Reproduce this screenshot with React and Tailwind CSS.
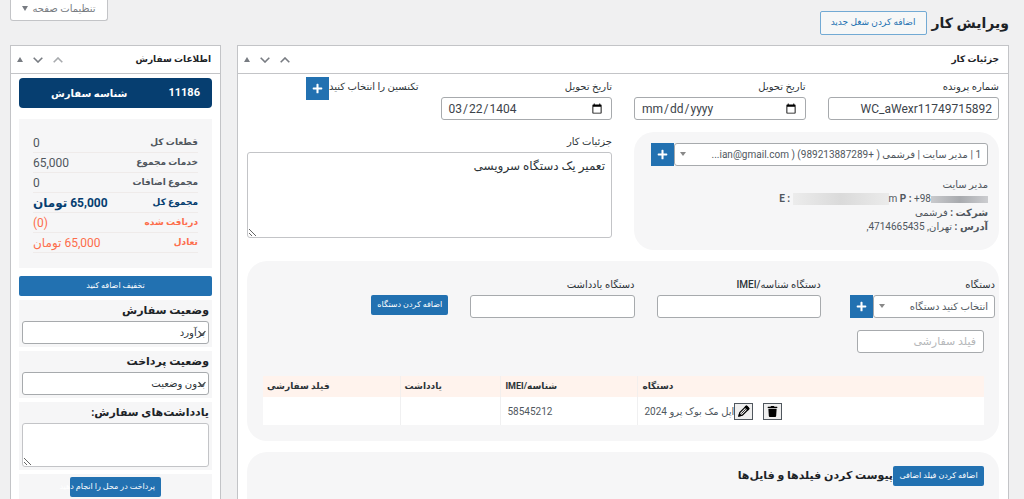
import { FaPlus, FaTrash } from "react-icons/fa";

const totals = [
  { label: "قطعات کل", value: "0", tone: "text-[#50575e]" },
  { label: "خدمات مجموع", value: "65,000", tone: "text-[#50575e]" },
  { label: "مجموع اضافات", value: "0", tone: "text-[#50575e]" },
  { label: "مجموع کل", value: "65,000 تومان", tone: "text-[#063e70] font-bold" },
  { label: "دریافت شده", value: "(0)", tone: "text-[#fd6d4b]" },
  { label: "تعادل", value: "65,000 تومان", tone: "text-[#fd6d4b]" },
];

const field =
  "block h-[23px] w-full rounded-[3px] border border-[#a7aaad] bg-white text-xs text-[#3c434a]";
const label = "block text-[10px] leading-5 font-medium text-[#2c3338]";
const blueButton =
  "h-5 rounded-[2px] bg-[#2271b1] text-[8px] font-medium whitespace-nowrap text-white";

function Chevron({ up, className }) {
  return (
    <svg className={className} width="10" height="6" viewBox="0 0 10 6" fill="none" stroke="currentColor" strokeWidth="1.6">
      <path d={up ? "M.7 5.3 5 1l4.3 4.3" : "M.7.7 5 5 9.3.7"} />
    </svg>
  );
}

function PanelHeader({ title, dim }) {
  return (
    <div className="flex h-7 items-center justify-between border-b border-[#c3c4c7] pr-[9px] pl-[6px]">
      <h2 className="text-[9px] font-bold text-[#1d2327]">{title}</h2>
      <div className="flex items-center gap-[10px] text-[#787c82]">
        <button type="button" aria-label="بالا" className={dim ? "text-[#a7aaad]" : ""}>
          <Chevron up />
        </button>
        <button type="button" aria-label="پایین">
          <Chevron />
        </button>
        <button type="button" aria-label="بستن">
          <svg width="6" height="5" viewBox="0 0 6 5" fill="currentColor">
            <path d="M3 0 6 5H0z" />
          </svg>
        </button>
      </div>
    </div>
  );
}

function PlusButton({ title }) {
  return (
    <button
      type="button"
      aria-label={title}
      className="flex h-[23px] w-[23px] shrink-0 items-center justify-center bg-[#2271b1] text-white"
    >
      <FaPlus size={11} />
    </button>
  );
}

function SearchSelect({ id, text, title }) {
  return (
    <div className="relative min-w-0 flex-1">
      <select
        id={id}
        aria-label={title}
        className="block h-[23px] w-full appearance-none rounded-[3px] border border-[#a7aaad] bg-white pr-[6px] pl-4 text-[10px] text-[#50575e]"
      >
        <option>{text}</option>
      </select>
      <svg className="pointer-events-none absolute top-[9px] left-[6px] text-[#888]" width="6" height="4" viewBox="0 0 6 4" fill="currentColor">
        <path d="M0 0h6L3 4z" />
      </svg>
    </div>
  );
}

function StatusBox({ id, title, text }) {
  return (
    <div className="mb-1 bg-[#f6f6f7] px-[3px] pt-[1px] pb-[3px]">
      <label htmlFor={id} className="block text-[11px] leading-5 font-bold text-[#1d2327]">
        {title}
      </label>
      <div className="relative">
        <select
          id={id}
          className="block h-[23px] w-full appearance-none rounded-[3px] border border-[#a7aaad] bg-white px-[3px] text-[10px] text-[#2c3338]"
        >
          <option>{text}</option>
        </select>
        <Chevron className="pointer-events-none absolute top-[9px] right-[3px] w-2 text-[#3c434a]" />
      </div>
    </div>
  );
}

function Sidebar() {
  return (
    <aside className="w-[211px] shrink-0 border border-[#c3c4c7] bg-white">
      <PanelHeader title="اطلاعات سفارش" dim />
      <div className="px-2 pt-1">
        <div className="flex h-[30px] items-center justify-between rounded bg-[#063e70] pr-3 pl-8 text-[10px] font-bold text-white">
          <span className="text-[11px]">11186</span>
          <span>شناسه سفارش</span>
        </div>
        <dl className="mt-[11px] bg-[#f6f6f7] px-[14px] pt-[14px] pb-[15px]">
          {totals.map((row) => (
            <div
              key={row.label}
              className={`flex h-5 items-center justify-between border-b border-[#efebea] ${row.tone}`}
            >
              <dt className="text-[9px] font-bold">{row.label}</dt>
              <dd className="text-xs">{row.value}</dd>
            </div>
          ))}
        </dl>
        <button type="button" className={`${blueButton} mt-2 mb-1 block w-full`}>
          تخفیف اضافه کنید
        </button>
        <StatusBox id="order-status" title="وضعیت سفارش" text="برآورد" />
        <StatusBox id="payment-status" title="وضعیت پرداخت" text="بدون وضعیت" />
        <div className="mb-1 bg-[#f6f6f7] px-[3px] pt-[1px] pb-[3px]">
          <label htmlFor="order-notes" className="block text-[11px] leading-5 font-bold text-[#1d2327]">
            یادداشت‌های سفارش:
          </label>
          <textarea id="order-notes" className="block h-11 w-full rounded-[3px] border border-[#c3c4c7] bg-white" />
        </div>
        <div className="flex justify-center bg-[#f6f6f7] py-[3px]">
          <button type="button" className={`${blueButton} flex w-[91px] items-center pr-[6px]`}>
            پرداخت در محل را انجام دهید
          </button>
        </div>
      </div>
    </aside>
  );
}

function CustomerBox() {
  return (
    <div className="col-span-2 h-[118px] rounded-[20px] bg-[#f6f6f7] px-[11px] pt-[11px]">
      <div className="flex pl-[6px]">
        <SearchSelect
          title="مشتری"
          text="1 | مدیر سایت | فرشمی ( +989213887289) ( ian@gmail.com..."
        />
        <PlusButton title="افزودن مشتری" />
      </div>
      <div className="mt-3 text-[10px] leading-[14px] text-[#50575e]">
        <p>مدیر سایت</p>
        <p dir="ltr" className="flex items-center justify-end whitespace-pre">
          <b>E : </b>
          <span className="h-3 w-24 bg-linear-to-r from-[#ececec] via-[#dadada] to-[#ebebeb]" />
          m <b>P : </b>+98
          <span className="h-[7px] w-[57px] bg-linear-to-r from-[#c9cacd] via-[#a8aaae] to-[#cccdd0]" />
        </p>
        <p>
          <b>شرکت :</b> فرشمی
        </p>
        <p>
          <b>آدرس :</b> تهران, 4714665435,
        </p>
      </div>
    </div>
  );
}

function DeviceBox() {
  return (
    <section className="mt-[11px] rounded-[20px] bg-[#f6f6f7] pt-[14px] pb-4">
      <div className="grid grid-cols-[152fr_164fr_164fr_201fr] gap-x-[22px] pr-1">
        <div>
          <label htmlFor="device" className={label}>دستگاه</label>
          <div className="flex pl-[7px]">
            <SearchSelect id="device" text="انتخاب کنید دستگاه" />
            <PlusButton title="افزودن دستگاه" />
          </div>
        </div>
        <div>
          <label htmlFor="imei" className={label}>دستگاه شناسه/IMEI</label>
          <input id="imei" className={`${field} px-2`} />
        </div>
        <div>
          <label htmlFor="device-note" className={label}>دستگاه یادداشت</label>
          <input id="device-note" className={`${field} px-2`} />
        </div>
        <div className="pt-5">
          <button type="button" className={`${blueButton} block w-[77px]`}>
            اضافه کردن دستگاه
          </button>
        </div>
      </div>
      <div className="pr-[15px] pl-4">
        <input
          aria-label="فیلد سفارشی"
          placeholder="فیلد سفارشی"
          className="mt-3 block h-[23px] w-[127px] rounded-[3px] border border-[#a7aaad] bg-white px-[7px] text-[11px] placeholder:text-[#b5b7ba]"
        />
        <table className="mt-[23px] w-full table-fixed border-collapse text-left text-[10px] text-[#50575e]">
          <thead>
            <tr className="h-[21px] bg-[#fff3ed] text-[9px] text-[#2c3338]">
              <th className="w-[48%] pl-1 font-bold">دستگاه</th>
              <th className="w-[19%] border-x border-[#f3efed] pl-1 font-bold">شناسه/IMEI</th>
              <th className="w-[14%] border-x border-[#f3efed] pl-1 font-bold">یادداشت</th>
              <th className="w-[19%] pl-1 font-bold">فیلد سفارشی</th>
            </tr>
          </thead>
          <tbody>
            <tr className="h-7 bg-white">
              <td className="pl-[6px]">
                <div className="flex items-center justify-end">
                  <button type="button" aria-label="حذف" className="ml-[10px] flex h-[17px] w-[19px] items-center justify-center border border-[#50575e] bg-[#efefef] text-black">
                    <FaTrash size={11} />
                  </button>
                  <button type="button" aria-label="ویرایش" className="flex h-[17px] w-[19px] items-center justify-center border border-[#50575e] bg-[#efefef] text-black">
                    <svg width="12" height="12" viewBox="0 0 12 12" fill="none" stroke="currentColor" strokeWidth="1.2">
                      <path d="M1 11l.8-3.4L8 1.4c.8-.8 3.4 1.7 2.6 2.6L4.4 10.2z" />
                      <path d="M3.4 8.6l4.4-4.4" strokeWidth=".8" />
                      <path d="M1 11l.5-2L3 10.500zM7.200 2.200l1-1 2.600 2.600-1 1z" fill="currentColor" />
                    </svg>
                  </button>
                  <span>اپل مک بوک پرو 2024</span>
                </div>
              </td>
              <td className="border-x border-[#f0f0f1] pl-[6px]">58545212</td>
              <td className="border-x border-[#f0f0f1]" />
              <td />
            </tr>
          </tbody>
        </table>
      </div>
    </section>
  );
}

function JobDetails() {
  return (
    <main className="min-w-0 flex-1 border border-[#c3c4c7] bg-white">
      <PanelHeader title="جزئیات کار" />
      <div className="px-[9px] pt-[3px]">
        <div className="grid grid-cols-4 gap-x-[22px] gap-y-3">
          <div>
            <label htmlFor="case-number" className={label}>شماره پرونده</label>
            <input id="case-number" defaultValue="WC_aWexr11749715892" className={`${field} px-[6px]`} />
          </div>
          <div>
            <label htmlFor="pickup-date" className={label}>تاریخ تحویل</label>
            <input id="pickup-date" type="date" dir="ltr" className={`${field} px-[6px]`} />
          </div>
          <div>
            <label htmlFor="delivery-date" className={label}>تاریخ تحویل</label>
            <input id="delivery-date" type="date" dir="ltr" defaultValue="1404-03-22" className={`${field} px-[6px]`} />
          </div>
          <div className="flex items-start">
            <span className={label}>تکنسین را انتخاب کنید</span>
            <PlusButton title="افزودن تکنسین" />
          </div>
          <CustomerBox />
          <div className="col-span-2">
            <label htmlFor="job-details" className={label}>جزئیات کار</label>
            <textarea
              id="job-details"
              defaultValue="تعمیر یک دستگاه سرویسی"
              className="block h-[86px] w-full rounded-[3px] border border-[#c3c4c7] bg-white px-[6px] py-[5px] text-xs text-[#2c3338]"
            />
          </div>
        </div>
        <DeviceBox />
        <section className="mt-[11px] flex items-start rounded-t-[20px] bg-[#f6f6f7] px-[15px] pt-[14px] pb-4">
          <button type="button" className={`${blueButton} w-[91px]`}>
            اضافه کردن فیلد اضافی
          </button>
          <h3 className="text-[11px] leading-5 font-bold text-[#1d2327]">پیوست کردن فیلدها و فایل‌ها</h3>
        </section>
      </div>
    </main>
  );
}

export default function App() {
  return (
    <div dir="rtl" className="min-h-screen bg-[#f0f0f1] pr-[15px] pl-[10px] font-[Roboto,'DejaVu_Sans',sans-serif]">
      <header className="flex h-[45px] items-start justify-between">
        <div className="flex items-center gap-[5px] pt-[11px]">
          <h1 className="text-sm leading-6 font-bold text-[#1d2327]">ویرایش کار</h1>
          <button type="button" className="h-6 w-[107px] rounded-[2px] border border-[#72aad4] bg-[#f6f7f7] text-[9px] text-[#2271b1]">
            اضافه کردن شغل جدید
          </button>
        </div>
        <button type="button" className="flex h-[21px] w-[98px] items-center justify-center gap-1 rounded-b-[3px] border border-t-0 border-[#c3c4c7] bg-white pb-1 text-[10px] text-[#787c82]">
          تنظیمات صفحه
          <svg width="6" height="5" viewBox="0 0 6 5" fill="currentColor">
            <path d="M0 0h6L3 5z" />
          </svg>
        </button>
      </header>
      <div className="flex gap-4">
        <JobDetails />
        <Sidebar />
      </div>
    </div>
  );
}
